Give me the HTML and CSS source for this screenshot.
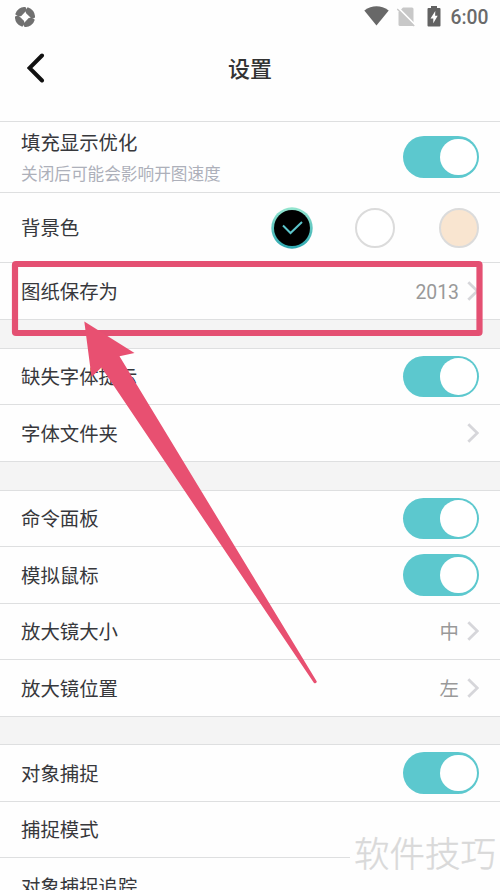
FILE: index.html
```
<!DOCTYPE html>
<html lang="zh-CN">
<head>
<meta charset="utf-8">
<title>设置</title>
<link rel="stylesheet" href="styles.css">
</head>
<body>
<div class="screen">
  <div class="status">
    <svg class="app-icon" viewBox="0 0 20 20"><defs><path id="blade" d="M.2 7.300A10 10 0 0 1 10.500 0Q12.500 3.500 9.800 5.300L6.300 8.900Q3 10.300.2 7.300Z" fill="#707070"/></defs><use href="#blade"/><use href="#blade" transform="rotate(90 10 10)"/><use href="#blade" transform="rotate(180 10 10)"/><use href="#blade" transform="rotate(270 10 10)"/></svg>
    <div class="status-right">
      <svg class="wifi" viewBox="0 0 25 20"><path d="M.3 4.500Q12.500-3.800 24.700 4.500L12.500 19.600Z" fill="#686868"/></svg>
      <svg class="sim" viewBox="0 0 18 20"><path d="M6 .5H15Q16.500.5 16.500 2V19H3Q1.500 19 1.500 17.500V5Z" fill="#c8c8c8"/><path d="M1 .8L18.500 18.300" stroke="#fff" stroke-width="2"/><path d="M.2 2L17.200 19" stroke="#c8c8c8" stroke-width="1.500"/></svg>
      <svg class="battery" viewBox="0 0 14 21"><path d="M4 0H10V2H12.500Q13.500 2 13.500 3V19.500Q13.500 20.500 12.500 20.500H1.500Q.5 20.500.5 19.500V3Q.5 2 1.500 2H4Z" fill="#626262"/><path d="M8.300 5L3.500 12.500H6.300V17.300L10.700 9.800H8.100Z" fill="#fff"/></svg>
      <span class="time">6:00</span>
    </div>
  </div>
  <header class="header">
    <svg class="back" viewBox="0 0 18 30"><path d="M15 2.500L2.500 15L15 27.500" fill="none" stroke="#111" stroke-width="4" stroke-linecap="round" stroke-linejoin="miter"/></svg>
    <h1 class="title">设置</h1>
  </header>
  <main class="list">
    <div class="row row-tall">
      <div class="labels"><span class="label">填充显示优化</span><span class="sub">关闭后可能会影响开图速度</span></div>
      <span class="toggle"></span>
    </div>
    <div class="row row-colors">
      <span class="label">背景色</span>
      <div class="swatches">
        <svg class="swatch-on" viewBox="0 0 42 42"><defs><linearGradient id="ring" x1="0" y1="0" x2="0" y2="1"><stop offset="0" stop-color="#96e6cf"/><stop offset="1" stop-color="#2ba6b0"/></linearGradient></defs><circle cx="21" cy="21" r="20.700" fill="url(#ring)"/><circle cx="21" cy="21" r="18" fill="#000"/><path d="M12 18.500L19.500 26L31 15" fill="none" stroke="#5cc5cb" stroke-width="2"/></svg>
        <span class="swatch"></span>
        <span class="swatch swatch-cream"></span>
      </div>
    </div>
    <div class="row row-save"><span class="label">图纸保存为</span><span class="value">2013</span><svg class="chevron" viewBox="0 0 12 20"><path d="M1.300 1.300L10.300 10L1.300 18.700"/></svg></div>
    <div class="gap"></div>
    <div class="row"><span class="label">缺失字体提示</span><span class="toggle"></span></div>
    <div class="row"><span class="label">字体文件夹</span><svg class="chevron" viewBox="0 0 12 20"><path d="M1.300 1.300L10.300 10L1.300 18.700"/></svg></div>
    <div class="gap"></div>
    <div class="row"><span class="label">命令面板</span><span class="toggle"></span></div>
    <div class="row"><span class="label">模拟鼠标</span><span class="toggle"></span></div>
    <div class="row"><span class="label">放大镜大小</span><span class="value">中</span><svg class="chevron" viewBox="0 0 12 20"><path d="M1.300 1.300L10.300 10L1.300 18.700"/></svg></div>
    <div class="row"><span class="label">放大镜位置</span><span class="value">左</span><svg class="chevron" viewBox="0 0 12 20"><path d="M1.300 1.300L10.300 10L1.300 18.700"/></svg></div>
    <div class="gap"></div>
    <div class="row"><span class="label">对象捕捉</span><span class="toggle"></span></div>
    <div class="row"><span class="label">捕捉模式</span></div>
    <div class="row"><span class="label">对象捕捉追踪</span></div>
  </main>
  <svg class="marks" viewBox="0 0 500 890"><rect x="15" y="264" width="464.500" height="69" rx="1" fill="none" stroke="#e45072" stroke-width="6.200"/><path d="M84.300 321.500L134.500 353L119.500 356.300L316.800 681.500Q316.500 684 314 683L101.500 367.500L91.500 377Z" fill="#e85071"/></svg>
  <div class="watermark">软件技巧</div>
</div>
</body>
</html>
```
FILE: styles.css
```
* { box-sizing: border-box; }
body { margin: 0; background: #fff; font-family: Roboto, "Noto Sans CJK SC", sans-serif; }
svg { display: block; flex: none; }
.screen { position: relative; width: 500px; height: 890px; overflow: hidden; background: #fefefe; }
.status { display: flex; justify-content: space-between; height: 34px; padding: 6px 11.5px 0 15px; }
.app-icon { width: 20px; height: 20px; margin-top: 1px; }
.status-right { display: flex; align-items: flex-start; }
.wifi { width: 25px; height: 20px; }
.sim { width: 18px; height: 20px; margin: 1px 0 0 8px; }
.battery { width: 14px; height: 21px; margin-left: 12px; }
.time { margin-left: 10px; font-size: 19.3px; line-height: 23px; font-weight: 500; color: #6a6a6a; }
.header { display: grid; grid-template-columns: 50px 1fr 50px; align-items: center; height: 87px; padding-bottom: 18px; }
.back { width: 18px; height: 30px; margin: -1px 0 0 27px; }
.title { margin: 0; padding-top: 2px; text-align: center; font-size: 22px; line-height: 32px; font-weight: 500; color: #333; }
.row { display: flex; align-items: center; height: 56.5px; padding: 0 21px; border-top: 1px solid #dedfe0; }
.row-tall { height: 71px; }
.row-colors { height: 70.4px; }
.row-save { height: 56.6px; }
.gap { height: 28.8px; background: #f4f4f4; border-top: 1px solid #dedfe0; }
.labels { display: flex; flex-direction: column; flex: 1; }
.label { flex: 1; padding-top: 3.4px; font-size: 19.4px; line-height: 28px; color: #37383c; }
.labels .label { padding-top: 4px; line-height: 31px; }
.sub { font-size: 16.65px; line-height: 31px; color: #adb0ba; }
.toggle { display: flex; justify-content: flex-end; width: 76px; height: 41.5px; padding: 2.5px; border-radius: 21px; background: #5cc8ce; }
.toggle::after { content: ""; width: 36.5px; height: 36.5px; border-radius: 50%; background: #fff; }
.swatches { display: flex; align-items: center; gap: 42px; }
.swatch-on { width: 42px; height: 42px; }
.swatch { width: 40px; height: 40px; border: 2px solid #dbdbdb; border-radius: 50%; background: #fff; }
.swatch-cream { background: #f9e5d0; margin-left: 2px; }
.value { padding-top: 3.4px; font-size: 19.4px; line-height: 28px; color: #999; }
.chevron { width: 12px; height: 20px; margin-left: 8px; fill: none; stroke: #d6d6da; stroke-width: 2.8; }
.marks { position: absolute; left: 0; top: 0; width: 500px; height: 890px; }
.watermark { position: absolute; left: 350px; top: 827px; width: 150px; height: 63px; padding-left: 4px; background: #fefefe; color: #d9d9d9; -webkit-text-stroke: .4px #d9d9d9; font-size: 35.5px; line-height: 56px; font-weight: 300; white-space: nowrap; }
```
